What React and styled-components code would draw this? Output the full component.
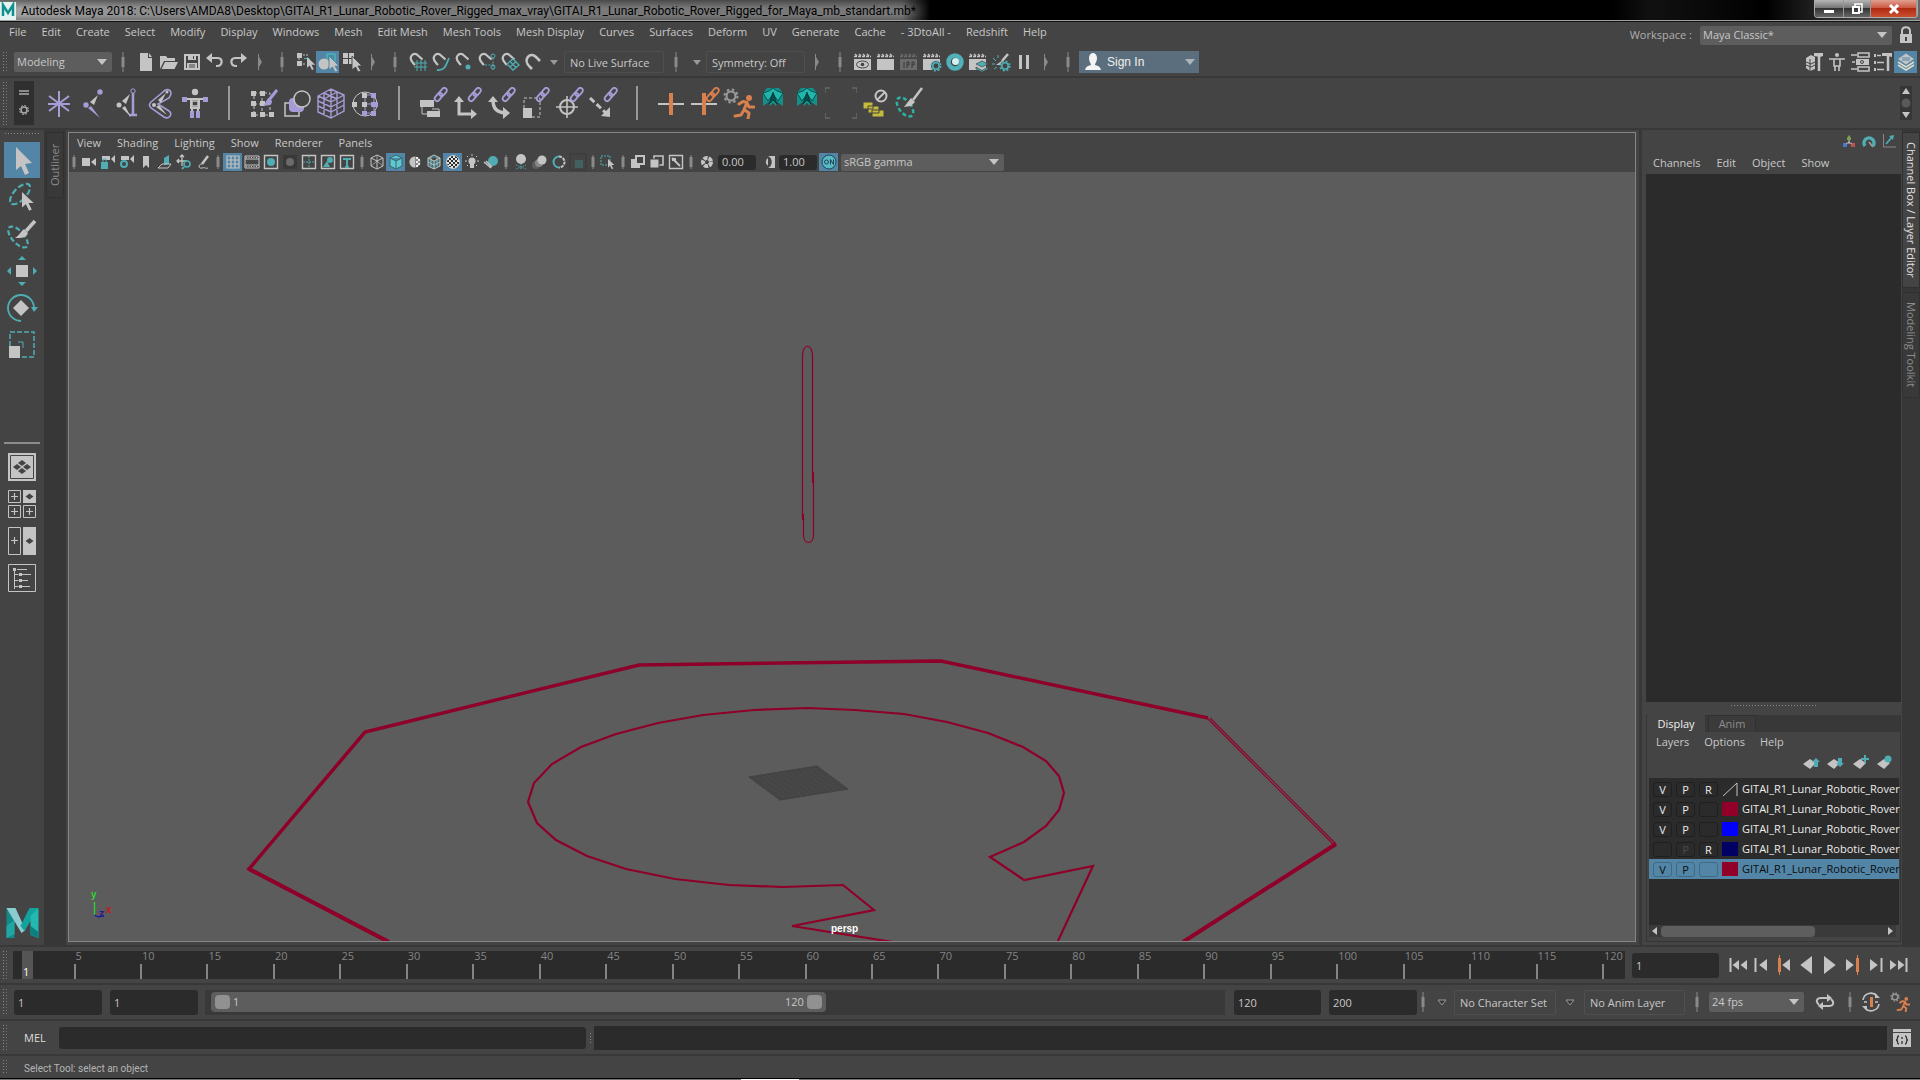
import React from "react";
import styled, { createGlobalStyle } from "styled-components";

const C = "#c4c4c4";
const T = "#4fadb3";
const P = "#a89cd6";
const O = "#d9804f";
const BG = "#444444";
const DARK = "#2b2b2b";
const LINE = "#383838";
const HL = "#5285a6";
const WINE = "#8e0029";

const GlobalStyle = createGlobalStyle`
  * { box-sizing: border-box; }
  html, body { margin: 0; background: #000; }
  body, button, input, select {
    font-family: "Open Sans", "Noto Sans", sans-serif;
    font-size: 11px;
    line-height: 16px;
    color: #c8c8c8;
  }
  button, input, select { margin: 0; padding: 0; border: 0; border-radius: 0; background: none; outline: none; }
  ul { margin: 0; padding: 0; list-style: none; }
  svg { display: block; flex: none; }
`;

/* ---------- layout ---------- */
const Window = styled.div`
  display: flex;
  flex-direction: column;
  height: 100vh;
  overflow: hidden;
  background: ${BG};
`;
const TitleBar = styled.header`
  display: flex;
  justify-content: space-between;
  height: 22px;
  flex: none;
  background: linear-gradient(90deg, #000 84%, #111 86%, #000 92%, #333 96%, #666 100%);
  border-bottom: 1px solid #111;
  box-shadow: inset 0 -1px 0 #a0a0a0;
  overflow: hidden;
`;
const Title = styled.h1`
  display: flex;
  align-items: center;
  gap: 5px;
  margin: 0;
  height: 20px;
  padding: 1px 14px 0 0;
  font-family: Roboto, "Open Sans", sans-serif;
  font-size: 12px;
  font-weight: 400;
  color: #000;
  background: linear-gradient(180deg, #0006, #0000 40%, #0000 75%, #0003), linear-gradient(90deg, #a4a4a4, #7c7c7c 30%, #777 97%, #000);
  white-space: nowrap;
`;
const WinControls = styled.div`
  display: flex;
  height: 18px;
  margin-right: 2px;
  border: 1px solid #aaa;
  border-top: 0;
  border-radius: 0 0 4px 4px;
  overflow: hidden;
`;
const WinButton = styled.button`
  display: grid;
  place-items: center;
  width: ${(p) => p.$w}px;
  border-right: 1px solid #999;
  background: ${(p) =>
    p.$close
      ? "linear-gradient(180deg,#e0a090,#cc5a44 45%,#b02a12 50%,#cc5030)"
      : "linear-gradient(180deg,#b5b5b5,#777 45%,#333 50%,#666)"};
`;
const Row = styled.div`
  display: flex;
  align-items: center;
  flex: none;
  height: ${(p) => p.$h}px;
  border-bottom: ${(p) => (p.$line ? `2px solid ${LINE}` : 0)};
`;
const Spacer = styled.div`
  flex: 1;
`;
const Menu = styled.nav`
  display: flex;
  gap: ${(p) => p.$gap || 15}px;
  padding-left: ${(p) => p.$pad || 9}px;
  align-self: ${(p) => (p.$top ? "flex-start" : "auto")};
  padding-top: ${(p) => (p.$top ? 2 : 0)}px;
`;
const MenuItem = styled.button`
  white-space: nowrap;
`;
const Grip = styled.div`
  flex: none;
  align-self: stretch;
  width: ${(p) => p.$w || 14}px;
  margin: 3px 0;
  background: radial-gradient(circle, #888 1px, transparent 1px) 2px 0 / 3px 3px repeat-y,
    radial-gradient(circle, #777 1px, transparent 1px) 5px 0 / 3px 3px repeat-y;
`;
const SplitGrip = styled.div`
  flex: none;
  width: 8px;
  height: 12px;
  background: radial-gradient(circle, #888 1px, transparent 1px) 3px 0 / 3px 3px repeat-y;
`;
const IconButton = styled.button`
  display: grid;
  place-items: center;
  flex: none;
  width: ${(p) => p.$w || 23}px;
  height: ${(p) => p.$h || 22}px;
  background: ${(p) => (p.$on ? HL : "none")};
`;
const SepCell = styled.div`
  display: grid;
  place-items: center;
  flex: none;
  width: ${(p) => p.$w || 22}px;
`;
const ReadBox = styled.input`
  width: ${(p) => p.$w}px;
  height: ${(p) => p.$h || 22}px;
  padding: 0 5px;
  border: 1px solid #4f4f4f;
  border-radius: 2px;
`;
const Field = styled.input`
  flex: none;
  width: ${(p) => p.$w}px;
  height: ${(p) => p.$h || 25}px;
  margin-right: ${(p) => p.$mr || 0}px;
  padding: 0 4px;
  border-radius: 3px;
  background: ${DARK};
`;
const Combo = styled.div`
  display: grid;
  grid-template-columns: 1fr 20px;
  align-items: center;
  flex: none;
  width: ${(p) => p.$w}px;
  height: ${(p) => p.$h || 20}px;
  background: #5d5d5d;
  border-radius: 2px;
  select {
    grid-area: 1 / 1 / 2 / 3;
    appearance: none;
    width: 100%;
    height: 100%;
    padding: 0 3px;
  }
  svg {
    grid-area: 1 / 2;
    justify-self: center;
    pointer-events: none;
  }
`;
const SignIn = styled.button`
  display: flex;
  align-items: center;
  gap: 4px;
  width: 120px;
  height: 22px;
  padding: 0 4px;
  background: #5a6e7d;
  color: #f0f0f0;
  font-family: "Liberation Sans", sans-serif;
  font-size: 12px;
`;
const WorkspaceLabel = styled.label`
  margin-right: 8px;
  color: #b0b0b0;
`;
const ShelfTabs = styled.div`
  display: flex;
  flex-direction: column;
  justify-content: space-evenly;
  align-items: center;
  width: 20px;
  height: 44px;
  margin-right: 8px;
  background: ${DARK};
  opacity: 0.8;
`;
const ShelfScroll = styled.div`
  display: flex;
  flex-direction: column;
  justify-content: space-around;
  align-items: center;
  width: 12px;
  height: 34px;
  margin-right: 8px;
  background: #363636;
`;
const Main = styled.main`
  display: flex;
  flex: 1;
  min-height: 0;
  border-bottom: 2px solid ${LINE};
`;
const ToolBox = styled.aside`
  display: flex;
  flex-direction: column;
  align-items: center;
  width: 44px;
  padding-bottom: 7px;
`;
const HGrip = styled.div`
  width: ${(p) => p.$w}px;
  height: ${(p) => p.$h}px;
  flex: none;
  align-self: center;
  background: radial-gradient(circle, #888 1px, transparent 1px) 0 2px / 3px 3px repeat-x;
`;
const ToolButton = styled(IconButton)`
  width: 36px;
  height: 36px;
  margin-bottom: 1px;
`;
const ToolRule = styled.div`
  width: 36px;
  height: 2px;
  margin: 78px 0 9px;
  background: #8c8c8c;
`;
const LayoutButton = styled(IconButton)`
  width: 28px;
  height: 28px;
  margin-bottom: 9px;
`;
const DockColumn = styled.aside`
  display: flex;
  flex-direction: column;
  align-items: flex-end;
  width: ${(p) => p.$w}px;
  flex: none;
  background: #373737;
  padding: 2px ${(p) => p.$pr || 0}px 0 0;
`;
const SideTab = styled.button`
  display: flex;
  align-items: center;
  justify-content: center;
  width: 18px;
  height: ${(p) => p.$h}px;
  margin-bottom: 4px;
  writing-mode: vertical-rl;
  white-space: nowrap;
  background: ${(p) => (p.$on ? BG : "#393939")};
  color: ${(p) => (p.$on ? "#e0e0e0" : "#8c8c8c")};
  border: 1px solid #303030;
  transform: ${(p) => (p.$flip ? "rotate(180deg)" : "none")};
`;
const ViewPanel = styled.section`
  display: flex;
  flex-direction: column;
  flex: 1;
  min-width: 0;
  margin: 2px 3px 3px 2px;
  border: 1px solid #868686;
`;
const Canvas = styled.div`
  flex: 1;
  min-height: 0;
  background: #5c5c5c;
  svg {
    width: 100%;
    height: 100%;
  }
`;
const RightDock = styled.aside`
  display: flex;
  flex-direction: column;
  width: 263px;
  flex: none;
  padding: 0 1px 3px 4px;
  border-left: 3px solid ${LINE};
`;
const DockIcons = styled.div`
  display: flex;
  justify-content: flex-end;
  height: 22px;
  align-items: center;
  padding-right: 2px;
`;
const ChannelArea = styled.div`
  flex: 1;
  min-height: 0;
  background: ${DARK};
`;
const LayerPanel = styled.section`
  display: flex;
  flex-direction: column;
  border: 1px solid #353535;
  border-top: 0;
`;
const LayerTabs = styled.div`
  display: flex;
  gap: 3px;
  background: ${LINE};
`;
const LayerTab = styled.button`
  height: 17px;
  width: ${(p) => p.$w}px;
  background: ${(p) => (p.$on ? BG : "#3b3b3b")};
  color: ${(p) => (p.$on ? "#eee" : "#8c8c8c")};
  border: 1px solid ${(p) => (p.$on ? BG : "#303030")};
  border-bottom: 0;
  border-radius: 2px 2px 0 0;
`;
const LayerTools = styled.div`
  display: flex;
  justify-content: flex-end;
  height: 26px;
  align-items: center;
  padding: 0 4px 5px 0;
`;
const LayerList = styled.ul`
  height: 147px;
  margin: 0 1px 0 2px;
  padding-top: 1px;
  background: ${DARK};
`;
const LayerRow = styled.li`
  display: flex;
  align-items: center;
  height: 20px;
  padding-left: 4px;
  gap: 4px;
  white-space: nowrap;
  background: ${(p) => (p.$on ? HL : "none")};
  color: ${(p) => (p.$on ? "#0c0c0c" : "#ececec")};
`;
const Flag = styled.button`
  flex: none;
  width: 19px;
  height: 15px;
  line-height: 13px;
  border: 1px solid ${(p) => (p.$on ? "#3f6a86" : "#1f1f1f")};
  border-radius: 3px;
  color: ${(p) => (p.$dim ? "#4c4c4c" : p.$on ? "#0c0c0c" : "#ececec")};
`;
const Swatch = styled.span`
  flex: none;
  width: 16px;
  height: 14px;
  background: ${(p) => p.$c};
`;
const LayerName = styled.span`
  flex: none;
`;
const HScroll = styled.div`
  display: flex;
  align-items: center;
  gap: 4px;
  height: 12px;
  margin: 0 4px 4px 2px;
  padding: 0 3px;
  background: #3a3a3a;
`;
const HTrack = styled.div`
  flex: 1;
`;
const HThumb = styled.div`
  width: 69%;
  height: 11px;
  border-radius: 4px;
  background: #5e5e5e;
`;
const Ruler = styled.div`
  display: flex;
  flex: 1;
  height: 28px;
  padding: 0 8px 0 9px;
  margin-right: 7px;
  background: ${DARK};
`;
const Tick = styled.div`
  flex: ${(p) => p.$n} 0 0;
  min-width: 0;
  padding-left: ${(p) => (p.$first ? 0 : 2)}px;
  line-height: 10px;
  color: #858585;
  background: ${(p) => (p.$first ? "none" : "linear-gradient(#858585, #858585) 0 100% / 2px 15px no-repeat")};
`;
const NowMark = styled.div`
  display: flex;
  align-items: flex-end;
  width: 11px;
  height: 28px;
  padding: 0 0 2px 1px;
  background: #555;
  color: #fff;
`;
const Transport = styled.div`
  display: flex;
  margin: 0 10px 0 7px;
`;
const RangeTrack = styled.div`
  flex: 1;
  height: 25px;
  margin: 0 9px 0 7px;
  padding: 2px 6px;
  background: #393939;
`;
const RangeBar = styled.div`
  display: flex;
  align-items: center;
  gap: 3px;
  width: 61%;
  height: 20px;
  padding: 0 4px;
  border-radius: 4px;
  background: #5d5d5d;
`;
const RangeHandle = styled.button`
  width: 15px;
  height: 14px;
  border-radius: 4px;
  background: #919191;
`;
const MelLabel = styled.label`
  width: 45px;
  padding-left: 10px;
  color: #ddd;
`;
const CommandInput = styled.input`
  width: 527px;
  height: 22px;
  padding: 0 5px;
  border-radius: 3px;
  background: ${DARK};
`;
const CommandResult = styled.output`
  flex: 1;
  height: 24px;
  background: ${DARK};
`;
const HelpLine = styled.p`
  margin: 0;
  padding: 4px 0 0 10px;
  font-family: Roboto, "Open Sans", sans-serif;
  font-size: 10px;
  color: #b4b4b4;
`;
const TaskEdge = styled.div`
  height: 2px;
  flex: none;
  border-top: 1px solid #000;
  background: linear-gradient(90deg, #777 0 38.6%, #fff 38.6% 41.6%, #777 41.6%);
`;

/* ---------- drawings ---------- */
const Svg = ({ s = 20, h, children, ...r }) => (
  <svg width={s} height={h || s} viewBox={`0 0 ${s} ${h || s}`} fill="none" stroke={C} aria-hidden="true" {...r}>
    {children}
  </svg>
);
const F = { fill: C, stroke: "none" };
const FT = { fill: T, stroke: "none" };
const FP = { fill: P, stroke: "none" };

const Down = ({ c = C }) => (
  <Svg s={10} h={6}><path d="M0 0h10l-5 6z" fill={c} stroke="none" /></Svg>
);
const Sep = ({ w, end, h = 20 }) => (
  <SepCell $w={w}>
    <Svg s={6} h={h} stroke="#8a8a8a">
      <path d={end ? `M1.500 ${h / 2 - 8}v16` : `M3 0v${h}`} />
      <path d={end ? `M2 ${h / 2 - 5}l3 5-3 5z` : `M1.500 ${h / 2 - 5}h3v10h-3z`} fill="#8a8a8a" stroke="none" />
    </Svg>
  </SepCell>
);
const cursor = (x, y, k = 1) => (
  <path transform={`translate(${x} ${y}) scale(${k})`} d="M0 0v12l3-2.500 2.500 5 2-1-2.500-5h4z" {...F} />
);
const magnet = <path d="M5.500 11.500C-1 5 6-1 10 3.500l4.500 4M5.500 11.500l1.500 1.500" strokeWidth="2.200" />;
const clap = (
  <>
    <path d="M1 7h17v11H1z" {...F} />
    <path d="M1 4.500h17M2 2l2 2M6 2l2 2M10 2l2 2M14 2l2 2" strokeWidth="1.500" strokeDasharray="3 1" />
  </>
);
const miniGear = (x, y, c = T) => (
  <>
    <circle cx={x} cy={y} r="3.200" stroke={c} strokeWidth="1.600" />
    <circle cx={x} cy={y} r="4.800" stroke={c} strokeWidth="1.600" strokeDasharray="2 1.770" />
  </>
);
const bigGear = (x, y) => (
  <>
    <circle cx={x} cy={y} r="4.500" stroke="#999" strokeWidth="2.200" />
    <circle cx={x} cy={y} r="6.500" stroke="#999" strokeWidth="2" strokeDasharray="2.500 2.600" />
  </>
);
const chain = (c = P) => (
  <g stroke={c} strokeWidth="1.800">
    <rect x="-4.500" y="-2.500" width="9" height="5" rx="2.500" transform="translate(21.500 10) rotate(-50)" />
    <rect x="-4.500" y="-2.500" width="9" height="5" rx="2.500" transform="translate(26 5) rotate(-50)" />
  </g>
);
const runner = (
  <g stroke={O} strokeWidth="3" strokeLinecap="round" strokeLinejoin="round">
    <circle cx="23" cy="9" r="1.500" fill={O} />
    <path d="M13 15l4-2.500 4 1-3 7 5 3.500-1 6M18 21l-3 5-6 1M21 14l2 4 5 0" />
  </g>
);
const body = (
  <>
    <circle cx="16" cy="5" r="3.200" {...F} />
    <path d="M6 12h20M12 12v9h8v-9M13 21v7M19 21v7" strokeWidth="2" />
    <path d="M13 14h6v5h-6z" strokeWidth="1.500" />
    <path d="M3 10h5v5H3zM24 10h5v5h-5zM11 24h4v4h-4zM17 24h4v4h-4zM11 28h4v3h-4zM17 28h4v3h-4z" {...FP} />
  </>
);

const I = {
  file: <Svg><path d="M4 1h8v5h4v13H4zM13 1l3 4h-3z" {...F} /></Svg>,
  open: <Svg><path d="M1 17V4h6l1.500 2H16v3H5zM6 10h13l-3.500 7H2.500z" {...F} /></Svg>,
  save: <Svg><path d="M3 3h14v14H3z" strokeWidth="2" /><path d="M6 3h8v5H6zM5 11h10v6H5z" {...F} /><path d="M11.500 4v3M7 13h6M7 15h6" stroke={BG} /></Svg>,
  undo: <Svg><path d="M5 6h8c5 0 5 8-1 8h-1" strokeWidth="2.200" /><path d="M7 1v10L1 6z" {...F} /></Svg>,
  redo: <Svg><path d="M15 6H7C2 6 2 14 8 14h1" strokeWidth="2.200" /><path d="M13 1v10l6-5z" {...F} /></Svg>,
  hier: <Svg><path d="M2 1h5v5H2zM2 9h5v5H2z" {...F} /><path d="M9 6.500h5v5" stroke={T} /><path d="M4 6v3M8 3h5M8 12h3" strokeDasharray="2 1" />{cursor(12, 5, 0.9)}</Svg>,
  obj: <Svg><path d="M9 2h8v8H9z" stroke="#4ec4c9" fill="#468f9e" /><circle cx="6" cy="12" r="5.500" {...F} /><path d="M11 4v14l3.500-3 2.500 5 3-1-3-5h4z" fill={C} stroke={HL} strokeWidth=".9" /></Svg>,
  comp: <Svg><path d="M2 1h5v5H2zM8 1h5v5H8zM2 7h5v5H2zM8 7h5v5H8z" {...F} /><path d="M11 4v14l3.500-3 2.500 5 3-1-3-5h4z" fill={C} stroke={BG} strokeWidth=".9" /></Svg>,
  mGrid: <Svg>{magnet}<path d="M6 11h13M6 15h13M9 8v11M13 8v11M17 8v11" stroke={T} /></Svg>,
  mCurve: <Svg>{magnet}<path d="M6 18c8 1 9-5 12-12" stroke={T} strokeWidth="1.800" /></Svg>,
  mPoint: <Svg>{magnet}<circle cx="14" cy="15" r="2.500" {...FT} /></Svg>,
  mProj: <Svg>{magnet}<path d="M16 6v12M8 13h9" stroke={T} strokeDasharray="2 1.500" /><circle cx="16" cy="4" r="2" stroke={T} /><circle cx="16" cy="15" r="2" stroke={T} /></Svg>,
  mPlane: <Svg>{magnet}<path d="M7 12l6-5 6 6-6 5zM10 9.500l6 6M10 15l6-5.500" stroke={T} strokeWidth="1.300" /></Svg>,
  mLive: <Svg><path d="M7 15C-1 8 7-1 13 5l4 4M7 15l2 2" strokeWidth="2.600" /></Svg>,
  rView: <Svg>{clap}<ellipse cx="9.500" cy="12.500" rx="6" ry="3.500" stroke="#444" /><circle cx="9.500" cy="12.500" r="1.800" fill="#444" stroke="none" /></Svg>,
  rNow: <Svg>{clap}</Svg>,
  rIpr: <Svg><g opacity=".3">{clap}<path d="M5 10v6M8 16v-6h2v3H8M13 16v-6h2v3h-2" stroke="#222" /></g></Svg>,
  rSet: <Svg>{clap}<circle cx="14" cy="14" r="5" fill={BG} stroke="none" />{miniGear(14, 14)}</Svg>,
  hyper: <Svg><circle cx="10" cy="10" r="6.500" stroke="#4fb2b9" strokeWidth="4.500" /><circle cx="10.500" cy="9.500" r="3.500" fill="#d8f0f0" stroke="none" /></Svg>,
  rLayer: <Svg>{clap}<path d="M8 12l6-3 6 3-6 3zM8 15l6 3.500 6-3.500v2l-6 3-6-3z" fill={T} stroke={BG} strokeWidth=".7" /></Svg>,
  light: <Svg><path d="M17 2l-6 7" strokeWidth="2.500" /><path d="M12 8l-3 5-4 0z" {...F} />{miniGear(14, 14)}<path d="M2 6l3 3M1 12h3M3 17l3-2M7 3v3" stroke={T} /></Svg>,
  pause: <Svg><path d="M5 3h3v14H5zM12 3h3v14h-3z" {...F} /></Svg>,
  user: <Svg><path d="M6 6a4 5 0 0 1 8 0c0 4-2 5-2 7 3 1 5 1 6 5H2c1-4 3-4 6-5 0-2-2-3-2-7z" fill="#f4f4f4" stroke="none" /></Svg>,
  lock: <Svg s={16} h={20}><path d="M4 9V6c0-5 8-5 8 0v3" strokeWidth="2" /><path d="M2 9h12v9H2z" {...F} /><path d="M8 12v4" stroke="#444" strokeWidth="2" /></Svg>,
  mt: <Svg><path d="M2 6l5-3 4 2v12l-5 2-4-3zM10 1h9v3l-3 1-6-1z" {...F} /><path d="M2 10l5 2 4-2M2 13l5 2 4-2M6 7v12" stroke={BG} /><path d="M15 3v16" strokeWidth="2.500" /></Svg>,
  human: <Svg><circle cx="10" cy="3" r="2" {...F} /><path d="M2 7h16M7 7v7h6V7M8 14v5M12 14v5" strokeWidth="1.600" /></Svg>,
  attr: <Svg><path d="M1 3h6M2 10h3M1 17h6M8 1h11v4H8zM8 15h11v4H8z" strokeWidth="1.600" /><path d="M6 7h13v6H6z" {...F} /><circle cx="12" cy="10" r="1.500" stroke="#444" /></Svg>,
  tool: <Svg><path d="M1 2h2v3H1zM1 9h2v3H1zM1 16h2v3H1zM9 1h10v4l-5-1H9z" {...F} /><path d="M4 3.500h4M4 10.500h7M4 17.500h7" strokeWidth="1.600" /><path d="M15 4v15" strokeWidth="2.500" /></Svg>,
  layers: <Svg><path d="M2 13l8 5 8-5M2 10l8 5 8-5" stroke="#e0d8c8" strokeWidth="1.500" /><path d="M2 7l8-5.500L18 7l-8 5.500z" {...F} /><path d="M6 6h8M6 8h8" stroke={HL} /></Svg>,

  // shelf
  locator: <Svg s={32}><path d="M16 4v26M6 9l20 15M6 24L26 9M5 17h22" stroke={P} strokeWidth="2" /></Svg>,
  joint: <Svg s={32}><circle cx="23" cy="5" r="2.700" {...FP} /><path d="M11 21l3-2 9 12z" {...FP} /><path d="M21 8l-8 7 4 3z" {...F} /><circle cx="9" cy="18" r="2.700" {...FP} /></Svg>,
  ik: <Svg s={32}><path d="M22 6v23M18 28h8" stroke={P} strokeWidth="2.500" /><circle cx="22" cy="4" r="2.200" stroke={P} /><path d="M19 7l-8 7 4 3zM11 21l3-2 6 11z" {...F} /><circle cx="8" cy="18" r="2.500" {...F} /></Svg>,
  bone: <Svg s={32}><path d="M26 7c0-6-6-5-8-2L6 15c-2 2-2 4 0 6l13 9c5 3 9-3 5-6l-11-7 11-6z" stroke={P} strokeWidth="1.600" /><path d="M21 6l-8 7 3 3zM11 20l3-2 8 10z" {...F} /><circle cx="9" cy="18" r="2" {...F} /><circle cx="22" cy="5" r="1.500" {...F} /></Svg>,
  body: <Svg s={32}>{body}</Svg>,
  paint: <Svg s={32}><path d="M7 6h16v22H7zM15 6v22M7 17h16" strokeDasharray="3 2" /><path d="M4 4h5v5H4zM13 4h5v5h-5zM4 14h5v5H4zM4 25h5v5H4zM13 25h5v5h-5zM22 25h5v5h-5zM13 14h5v5h-5z" {...F} /><path d="M30 3l-8 10" stroke={P} strokeWidth="3" /><path d="M22 11l3 3c0 5-5 5-9 4 3-1 3-6 6-7z" {...FP} /></Svg>,
  blend: <Svg s={32}><path d="M4 16h14v13H4z" strokeWidth="1.500" /><rect x="8" y="11" width="15" height="14" rx="4" {...FP} /><circle cx="21" cy="12" r="8" fill={BG} strokeWidth="1.500" /></Svg>,
  lattice: <Svg s={32}><path d="M3 9l13-7 13 6v16l-13 7-13-6zM3 9l13 6 13-7M16 15v16M3 14l13 6 13-7M3 19l13 6 13-7M9 6v22M22 5v22M9 12l13-7M9 6l13 6M16 2v13" stroke={P} strokeWidth="1.400" /></Svg>,
  cluster: <Svg s={32}><circle cx="16" cy="17" r="12" /><path d="M16 8h9v18h-9zM16 17h12" stroke={P} /><path d="M13 6h5v5h-5zM13 15h5v5h-5zM3 15h5v5H3z" {...F} /><path d="M22 6h5v5h-5zM22 15h7v5h-7zM22 24h5v5h-5zM13 24h5v5h-5z" {...FP} /></Svg>,
  cParent: <Svg s={32}><path d="M3 13h14v7H3zM10 24h13v6H10z" {...F} /><path d="M5 20v7h5M15 22h7v3" />{chain()}</Svg>,
  cPoint: <Svg s={32}><path d="M8 13v14h14" strokeWidth="3" /><path d="M3 15l5-6 5 6zM20 22l6 5-6 5z" {...F} />{chain()}</Svg>,
  cOrient: <Svg s={32}><path d="M8 13c0 9 4 12 12 13" strokeWidth="3.500" /><path d="M3 15l5-6 5 6zM18 20l7 6-7 6z" {...F} />{chain()}</Svg>,
  cScale: <Svg s={32}><path d="M5 11h16v19H5z" strokeDasharray="3 2" /><path d="M4 21h9v10H4z" {...F} />{chain()}</Svg>,
  cAim: <Svg s={32}><circle cx="14" cy="20" r="7" strokeWidth="2" /><path d="M14 9v22M3 20h22" strokeWidth="1.600" />{chain()}</Svg>,
  cPole: <Svg s={32}><path d="M3 11l16 15" strokeWidth="3" strokeDasharray="6 3" /><path d="M23 30V20l-9 9z" {...F} />{chain()}</Svg>,
  key: <Svg s={32}><path d="M3 17h26" strokeWidth="2" /><path d="M14 6h4v22h-4z" fill={O} stroke="none" /></Svg>,
  keyLink: <Svg s={32}><path d="M2 17h26" strokeWidth="2" /><path d="M13 6h4v22h-4z" fill={O} stroke="none" />{chain(O)}</Svg>,
  run: <Svg s={32}>{bigGear(8, 9)}<g transform="translate(3 2)">{runner}</g></Svg>,
  crown: <Svg s={32}><path d="M6 6l4-5h12l4 5v13l-6-4-1 4-3-3-3 3-1-4-6 4z" fill="#12908a" stroke="none" /><path d="M6 6l6-2 4-3 4 3 6 2-5 8-5-7-5 7z" fill="#22b5ab" stroke="#043c3c" strokeWidth=".8" /><path d="M12 17l4-12 4 12-4-4z" fill="#0a4a4a" stroke="#033" strokeWidth=".7" /></Svg>,
  frame: <Svg s={32}><path d="M0 6V1h5M27 1h5v5M32 26v5h-5M5 31H0v-5" stroke="#777" /></Svg>,
  folders: <Svg s={32}><path d="M4 15h10v7H4zM9 19h11v7H9zM13 23h12v7H13z" fill="#c4bb3c" stroke={BG} /><circle cx="22" cy="9" r="5.500" strokeWidth="2" /><path d="M18 13l8-8" strokeWidth="2" /></Svg>,
  lassoBrush: <Svg s={32}><ellipse cx="12" cy="20" rx="6" ry="11" transform="rotate(-38 12 20)" stroke="#2fb0a4" strokeWidth="2.500" strokeDasharray="4 2.500" /><path d="M29 1l-9 12" strokeWidth="2.500" /><path d="M18 11l4 4-4 4-7 1z" {...F} /></Svg>,
};

// view panel icons, 18px square
const frameBox = <path d="M2.500 2.500h13v13h-13z" strokeWidth="1.400" />;
const cube = (c, f) => <path d="M9 2l6 3v8l-6 3-6-3V5zM3 5l6 3 6-3M9 8v8" stroke={c} fill={f || "none"} />;
const V = {
  cam: <path d="M2 5h8v8H2zM11 9l5-4v8z" {...F} />,
  camLock: <><path d="M3 3h8v4H3zM12 6l4-4v8z" {...F} /><path d="M2 9h7v7H2z" {...FT} /><path d="M4 9V6h3v3" stroke={T} /></>,
  camGear: <><path d="M3 3h8v4H3zM12 6l4-4v8z" {...F} /><circle cx="6" cy="11" r="3" stroke={T} strokeWidth="2" fill={BG} /></>,
  mark: <path d="M6 3h6v12l-3-3-3 3z" {...F} />,
  plane: <><path d="M8 12V5l5-3v9z" {...FT} /><path d="M2 15l4-4h9l-3 4z" /></>,
  pan: <><path d="M7 2v11M2 8h10M5 4l2-2 2 2M4 6L2 8l2 2" strokeWidth="1.300" /><circle cx="12" cy="11" r="3" stroke={T} strokeWidth="1.600" /><path d="M9 14l-2 2" stroke={T} strokeWidth="2" /></>,
  pencil: <><path d="M14 3l-6 8" strokeWidth="2.500" /><path d="M8 11c-4 0-4 5 0 4s3 1 6 0" /></>,
  grid: <path d="M3 3h12v12H3zM7 3v12M11 3v12M3 7h12M3 11h12" strokeWidth="1.200" />,
  film: <><path d="M2 3h14v12H2zM2 6h14M2 12h14" /><path d="M3 4.500h12M3 13.500h12" strokeDasharray="1 1.500" /></>,
  res: <>{frameBox}<circle cx="9" cy="9" r="4" {...FT} /></>,
  gate: <g opacity=".3"><path d="M2 2h14v14H2z" fill="#222" stroke="none" /><circle cx="9" cy="9" r="4" {...F} /></g>,
  field: <>{frameBox}<path d="M3 9h12M9 3v12" stroke={T} strokeDasharray="2 1" /></>,
  safe: <>{frameBox}<path d="M4 14l4-6 3 6z" {...FT} /><circle cx="11" cy="7" r="3" {...FT} /></>,
  title: <>{frameBox}<path d="M5 6h8M9 6v8M7 14h4" stroke={T} strokeWidth="2" /></>,
  wire: <>{cube(C)}<path d="M3 13l6-5 6 5M9 2v6" strokeWidth=".7" /></>,
  shade: cube("#2f6a72", "#62c6cf"),
  tex: <><circle cx="9" cy="9" r="5.500" fill="#888" stroke="none" /><path d="M9 3.500a5.500 5.500 0 0 0 0 11z" {...F} /><path d="M10 5h2M12 7h2M10 9h2M12 11h2M10 13h2" stroke="#eee" strokeWidth="2" /></>,
  wireShade: <>{cube(C, "#3c7378")}<path d="M6 4v9M12 4v9M3 9l6 3 6-3" strokeWidth=".8" /></>,
  check: (
    <>
      <circle cx="9" cy="9" r="6.500" fill="#e4e4e4" stroke="none" />
      <path
        d="M7 3h2v2H7zM11 3h2v2h-2zM5 5h2v2H5zM9 5h2v2H9zM13 5h1v2h-1zM3 7h2v2H3zM7 7h2v2H7zM11 7h2v2h-2zM5 9h2v2H5zM9 9h2v2H9zM13 9h2v2h-2zM3 11h2v1H3zM7 11h2v2H7zM11 11h2v2h-2zM5 13h2v1H5zM9 13h2v2H9z"
        fill="#2c2c2c"
        stroke="none"
      />
      <circle cx="9" cy="9" r="6.500" stroke="#ccc" strokeWidth=".8" />
    </>
  ),
  bulb: <><circle cx="9" cy="8" r="3.500" {...F} /><path d="M7 10h4v5H7z" {...F} /><path d="M9 1v2M2 8h2M14 8h2M4 3l1 1M14 3l-1 1M4 13l1-1M14 13l-1-1" /></>,
  shadow: <><circle cx="11" cy="8" r="5" {...FT} /><path d="M2 9l7 6M4 8l6 6" strokeWidth="1.500" /></>,
  ao: <><circle cx="9" cy="6" r="5" {...F} /><path d="M4 12l10 4M14 12L4 16M9 11v5" stroke={T} strokeDasharray="1 1" /></>,
  blur: <><circle cx="5" cy="12" r="4" fill="#5d5d5d" stroke="none" /><circle cx="8" cy="10" r="4" fill="#888" stroke="none" /><circle cx="11" cy="7" r="4.500" {...F} /></>,
  aa: <><path d="M9 3.500a5.500 5.500 0 0 0 0 11" stroke={T} strokeWidth="2" /><path d="M9 3.500a5.500 5.500 0 0 1 0 11" strokeWidth="2" strokeDasharray="3 1" /></>,
  dof: <><path d="M1 1h16v16H1z" stroke="#383838" /><path d="M6 7h8v8H6z" fill="#41605f" stroke="none" /></>,
  iso: <><path d="M2 3h9v9H2z" stroke={T} strokeDasharray="2 1" />{cursor(9, 6, 0.7)}</>,
  xr1: <><path d="M2 6h9v9H2z" {...F} /><path d="M7 3h8v8H7z" fill={BG} strokeWidth="2" /></>,
  xr2: <><path d="M6 3h9v9H6z" strokeWidth="1.600" /><path d="M2 6h9v9H2z" fill={C} stroke={BG} /></>,
  xr3: <>{frameBox}<path d="M5 5l8 8" strokeWidth="2" /><path d="M5 5h4v3H5z" {...F} /></>,
  aperture: <circle cx="9" cy="9" r="4" strokeWidth="4" strokeDasharray="4 1" />,
  contrast: <><path d="M7 5a4 4.500 0 0 0 0 8z" {...F} /><path d="M7 3h7v12H7c5-2 5-10 0-12z" {...F} /></>,
  on: <><circle cx="9" cy="9" r="7" fill="#56b9c4" stroke="#245" /><circle cx="6.500" cy="9" r="2" stroke="#245" /><path d="M10.500 11.500v-5l3 5v-5" stroke="#245" /></>,
};

const L = {
  arrow: <Svg s={36}><path d="M12 5v23l5-4 4 9 4-2-4-9 7-1z" {...F} /></Svg>,
  lasso: <Svg s={36}><ellipse cx="16" cy="15" rx="6" ry="13" transform="rotate(44 16 15)" stroke={T} strokeWidth="2.200" strokeDasharray="6 2.500" /><g transform="translate(18 13) scale(1.300)">{cursor(0, 0)}</g></Svg>,
  paintSel: <Svg s={36}><ellipse cx="14" cy="21" rx="6" ry="13" transform="rotate(-42 14 21)" stroke={T} strokeWidth="2.200" strokeDasharray="5 2.500" /><path d="M31 5l-9 10" strokeWidth="3.500" /><path d="M20 13l4 4c-2 5-6 5-13 5 4-2 6-7 9-9z" {...F} /></Svg>,
  move: <Svg s={36}><path d="M12 12h12v12H12z" {...F} /><path d="M14 7l4-4 4 4zM14 29l4 4 4-4zM7 14l-4 4 4 4zM29 14l4 4-4 4z" {...FT} /></Svg>,
  rotate: <Svg s={36}><path d="M17 31A13 13 0 1 1 30 18" stroke={T} strokeWidth="1.800" /><path d="M27 17h7l-4 5z" {...FT} /><path d="M17 10l8 8-8 8-8-8z" {...F} /></Svg>,
  scale: <Svg s={36}><path d="M6 5h24v25H6z" stroke={T} strokeWidth="1.500" strokeDasharray="5 2" /><path d="M14 15h5v6" stroke={T} /><path d="M5 19h11v12H5z" {...F} /></Svg>,
};
const dia = (x, y, k = 1, c = "#444") => <path d={`M${x - 4 * k} ${y}l${4 * k}-${3 * k} ${4 * k} ${3 * k}-${4 * k} ${3 * k}z`} fill={c} stroke="none" />;
const plus = (x, y) => <path d={`M${x - 3.5} ${y}h7M${x} ${y - 3.5}v7`} strokeWidth="1.200" />;
const G = {
  one: <Svg s={28} h={28}><path d="M0 0h28v28H0z" {...F} /><path d="M2.500 2.500h23v23h-23z" stroke="#444" />{dia(14, 10)}{dia(14, 18)}{dia(9, 14)}{dia(19, 14)}</Svg>,
  four: <Svg s={28} h={28}><path d="M.5.5h12v12H.5zM.5 15.500h12v12H.5zM15.500 15.500h12v12h-12z" />{plus(6.5, 6.5)}{plus(6.5, 21.5)}{plus(21.5, 21.5)}<path d="M15 0h13v13H15z" {...F} />{dia(21.5, 6.5)}</Svg>,
  two: <Svg s={28} h={28}><path d="M.5.5h12v27H.5z" />{plus(6.5, 13.5)}<path d="M15 0h13v28H15z" {...F} />{dia(21.5, 14)}</Svg>,
  tree: <Svg s={28} h={28}><path d="M.5.5h27v27H.5zM6.500 6v19M6.500 10.500h4M6.500 16.500h4M6.500 22.500h4M9 5.500h10M13 10.500h10M13 16.500h7M13 22.500h9" /><path d="M5 4h3v3H5zM11 9h3v3h-3zM11 15h3v3h-3zM11 21h3v3h-3z" {...F} /></Svg>,
};

const Logo = ({ w, h }) => (
  <svg width={w} height={h} viewBox="0 0 32 30" aria-hidden="true">
    <path d="M0 0h8v30H0z" fill="#128a89" />
    <path d="M0 30V18l8-6v14z" fill="#1ea7a4" />
    <path d="M0 0h9l10 22-4 3z" fill="#8ccbd0" />
    <path d="M14 18L23 0h9L18 23z" fill="#12a39e" />
    <path d="M24 8l8-8v30l-8-3z" fill="#23b8b0" />
    <path d="M24 18l8 6v6l-8-3z" fill="#0c7f80" />
  </svg>
);

const OUTER = "387,941 249,869 365,732 639,665 941,661 1208,718";
const INNER =
  "1057,943 1093,866 1024,880 990,857 1024,842 1046,826 1059,810 1064,793 1059,776 1046,761 1023,747 988,733 947,722 904,714 855,710 807,708 754,710 703,715 658,723 616,734 581,747 552,764 534,783 528,802 537,823 556,840 587,856 626,869 675,879 729,885 783,887 843,885 874,910 792,926 899,943";
const gridLines = Array.from({ length: 13 }, (_, i) => i / 12);

const Scene = () => (
  <svg viewBox="69 172 1566 769" preserveAspectRatio="xMidYMax slice" fill="none" stroke={WINE} role="img" aria-label="Perspective view">
    <path d="M749 777L817 766 848 789 780 800z" fill="#434343" stroke="#3c3c3c" />
    <g stroke="#4e4e4e" strokeWidth=".6">
      {gridLines.map((t) => (
        <path key={t} d={`M${749 + 68 * t} ${777 - 11 * t}l31 23M${749 + 31 * t} ${777 + 23 * t}l68 -11`} />
      ))}
    </g>
    <polyline points={OUTER} strokeWidth="3.500" />
    <path d="M1208 719L1334 845M1210 718L1336 844" strokeWidth="1.200" />
    <path d="M1336 844L1183 942" strokeWidth="4" />
    <path d="M389 942L249 869" strokeWidth="4" />
    <polyline points={INNER} strokeWidth="2.200" />
    <path d="M802.500 518V356c0-13 10-13 10 0v117l1 6v56c0 10-10 10-10 0v-17z" strokeWidth="1.200" />
    <path d="M813 472v11M803 514v6" strokeWidth="2" />
    <path d="M94.500 916v-14" stroke="#2fd52f" strokeWidth="1.300" />
    <path d="M94 915l5 2 5-2" stroke="#1a1a9a" strokeWidth="1.300" />
    <path d="M99 914l6-3" stroke="#b01c4a" />
    <g stroke="none" fontFamily="Liberation Sans, sans-serif" fontWeight="700" fontSize="10">
      <text x="91" y="898" fill="#2fd52f">y</text>
      <text x="106" y="913" fill="#c01c1c">x</text>
      <text x="99" y="917" fill="#1c1ca8">z</text>
      <text x="831" y="932" fill="#fff">persp</text>
    </g>
  </svg>
);

/* ---------- parts ---------- */
const MenuBar = ({ items, ...r }) => (
  <Menu {...r}>{items.map((t) => <MenuItem key={t} type="button">{t}</MenuItem>)}</Menu>
);
const Icons = ({ names, set = I, on = [], ...r }) =>
  names.map((n) => (
    <IconButton key={n} type="button" aria-label={n} $on={on.includes(n)} {...r}>{set[n]}</IconButton>
  ));
const ViewIcons = ({ names, on = [] }) =>
  names.map((n) => (
    <IconButton key={n} type="button" aria-label={n} $w={19} $h={18} $on={on.includes(n)}>
      <Svg s={18}>{V[n]}</Svg>
    </IconButton>
  ));
const Select = ({ label, value, w, h, id }) => (
  <Combo $w={w} $h={h}>
    <select id={id} aria-label={label} defaultValue={value}><option>{value}</option></select>
    <Down />
  </Combo>
);
const ShelfSep = () => (
  <SepCell $w={34}><Svg s={2} h={34}><path d="M1 0v34" stroke="#999" strokeWidth="2" /></Svg></SepCell>
);

const MENUS = ["File", "Edit", "Create", "Select", "Modify", "Display", "Windows", "Mesh", "Edit Mesh", "Mesh Tools", "Mesh Display", "Curves", "Surfaces", "Deform", "UV", "Generate", "Cache", "- 3DtoAll -", "Redshift", "Help"];
const LAYERS = [
  { f: ["V", "P", "R"], c: null },
  { f: ["V", "P", ""], c: "#900028" },
  { f: ["V", "P", ""], c: "#0000ff" },
  { f: ["", "P", "R"], c: "#000064", dimP: true },
  { f: ["V", "P", ""], c: "#900028", on: true },
];
const TICKS = Array.from({ length: 24 }, (_, i) => (i + 1) * 5);
const tri = (x, dir, k = 8) => `M${x} ${11 - k}v${2 * k}l${dir * k * 1.3}-${k}z`;
const PLAY = {
  "Go to start": <><path d="M3.500 4v14" strokeWidth="2" /><path d={tri(12, -1, 5)} {...F} /><path d={tri(20, -1, 5)} {...F} /></>,
  "Step back frame": <><path d="M5.500 4v14" strokeWidth="2" /><path d={tri(17, -1, 6)} {...F} /></>,
  "Step back key": <><path d="M6.500 1v20" stroke={O} /><path d="M5 4h3v14H5z" fill={O} stroke="none" /><path d={tri(17, -1, 6)} {...F} /></>,
  "Play backwards": <path d={tri(16, -1, 9)} {...F} />,
  "Play forwards": <path d={tri(5, 1, 9)} {...F} />,
  "Step forward key": <><path d="M15.500 1v20" stroke={O} /><path d="M14 4h3v14h-3z" fill={O} stroke="none" /><path d={tri(4, 1, 6)} {...F} /></>,
  "Step forward frame": <><path d="M16.500 4v14" strokeWidth="2" /><path d={tri(5, 1, 6)} {...F} /></>,
  "Go to end": <><path d="M18.500 4v14" strokeWidth="2" /><path d={tri(2, 1, 5)} {...F} /><path d={tri(10, 1, 5)} {...F} /></>,
};
const layerIcon = (extra) => (
  <Svg s={18}><path d="M1 10l7-5 6 4-6 6z" {...F} />{extra}</Svg>
);
const Caret = ({ w }) => (
  <SepCell $w={w}><Svg s={10} h={7}><path d="M1 1h8L5 6z" stroke="#999" fill="#333" /></Svg></SepCell>
);

export default function App() {
  return (
    <Window>
      <GlobalStyle />
      <TitleBar>
        <Title>
          <Svg s={16} h={18} stroke="none"><path d="M0 0h16v18H0z" fill="#e4f2f1" /><path d="M3 14V3l5 8 5-8v11" stroke="#12908e" strokeWidth="2.500" /></Svg>
          Autodesk Maya 2018: C:\Users\AMDA8\Desktop\GITAI_R1_Lunar_Robotic_Rover_Rigged_max_vray\GITAI_R1_Lunar_Robotic_Rover_Rigged_for_Maya_mb_standart.mb*
        </Title>
        <WinControls>
          <WinButton $w={29} aria-label="Minimize"><Svg s={12}><path d="M1 7h10v3H1z" fill="#fff" stroke="none" /></Svg></WinButton>
          <WinButton $w={27} aria-label="Restore"><Svg s={12} stroke="#fff"><path d="M4 3V1h7v8H9" strokeWidth="1.500" /><path d="M2 4h6v6H2z" strokeWidth="2" /></Svg></WinButton>
          <WinButton $w={46} $close aria-label="Close"><Svg s={12} stroke="#fff"><path d="M2 2l8 8M10 2l-8 8" strokeWidth="3" /></Svg></WinButton>
        </WinControls>
      </TitleBar>

      <Row $h={26}>
        <MenuBar items={MENUS} $top />
        <Spacer />
        <WorkspaceLabel htmlFor="workspace">Workspace :</WorkspaceLabel>
        <Select id="workspace" value="Maya Classic*" w={192} h={19} />
        <IconButton $w={28} aria-label="Lock workspace">{I.lock}</IconButton>
      </Row>

      <Row $h={30} $line>
        <Grip />
        <Select label="Menu set" value="Modeling" w={98} />
        <Sep />
        <Icons names={["file", "open", "save", "undo", "redo"]} />
        <Sep end /><Sep />
        <Icons names={["hier", "obj", "comp"]} on={["obj"]} />
        <Sep end /><Sep />
        <Icons names={["mGrid", "mCurve", "mPoint", "mProj", "mPlane", "mLive"]} />
        <SepCell $w={20}><Svg s={8} h={5}><path d="M0 0h8L4 5z" fill="#999" stroke="none" /></Svg></SepCell>
        <ReadBox aria-label="Live surface" defaultValue="No Live Surface" $w={100} />
        <Sep w={24} />
        <SepCell $w={18}><Svg s={8} h={5}><path d="M0 0h8L4 5z" fill="#999" stroke="none" /></Svg></SepCell>
        <ReadBox aria-label="Symmetry" defaultValue="Symmetry: Off" $w={99} />
        <Sep w={24} end /><Sep />
        <Icons names={["rView", "rNow", "rIpr", "rSet", "hyper", "rLayer", "light", "pause"]} />
        <Sep end /><Sep />
        <SignIn type="button">{I.user}Sign In<Spacer /><Down c="#aab4ba" /></SignIn>
        <Spacer />
        <Icons names={["mt", "human", "attr", "tool", "layers"]} on={["layers"]} />
        <SepCell $w={3} />
      </Row>

      <Row $h={52} $line>
        <Grip />
        <ShelfTabs>
          <Svg s={10} h={6}><path d="M0 1h10M0 4h10" strokeWidth="1.500" /></Svg>
          <Svg s={12}><circle cx="6" cy="6" r="3" strokeWidth="1.500" /><circle cx="6" cy="6" r="4.500" strokeDasharray="2 1.500" /></Svg>
        </ShelfTabs>
        <Icons names={["locator", "joint", "ik", "bone", "body"]} $w={34} $h={34} />
        <ShelfSep />
        <Icons names={["paint", "blend", "lattice", "cluster"]} $w={34} $h={34} />
        <ShelfSep />
        <Icons names={["cParent", "cPoint", "cOrient", "cScale", "cAim", "cPole"]} $w={34} $h={34} />
        <ShelfSep />
        <Icons names={["key", "keyLink", "run", "crown"]} $w={34} $h={34} />
        <Icons names={["crown", "frame", "folders", "lassoBrush"]} $w={34} $h={34} />
        <Spacer />
        <ShelfScroll>
          <Svg s={8} h={6}><path d="M0 6l4-6 4 6z" {...F} /></Svg>
          <Svg s={10}><circle cx="5" cy="5" r="4.500" fill="#5a5a5a" stroke="none" /></Svg>
          <Svg s={8} h={6}><path d="M0 0l4 6 4-6z" {...F} /></Svg>
        </ShelfScroll>
      </Row>

      <Main>
        <ToolBox>
          <HGrip $w={36} $h={12} />
          {Object.keys(L).map((k) => (
            <ToolButton key={k} type="button" aria-label={k} $on={k === "arrow"}>{L[k]}</ToolButton>
          ))}
          <ToolRule />
          {Object.keys(G).map((k) => (
            <LayoutButton key={k} type="button" aria-label={`${k} layout`}>{G[k]}</LayoutButton>
          ))}
          <Spacer />
          <Logo w={33} h={30} />
        </ToolBox>
        <DockColumn $w={22} $pr={2}>
          <SideTab type="button" $h={66} $flip>Outliner</SideTab>
        </DockColumn>
        <ViewPanel>
          <Row $h={19}><MenuBar items={["View", "Shading", "Lighting", "Show", "Renderer", "Panels"]} $pad={8} $gap={16} /></Row>
          <Row $h={20}>
            <Sep w={10} h={14} />
            <ViewIcons names={["cam", "camLock", "camGear", "mark", "plane", "pan", "pencil"]} />
            <Sep w={11} h={14} />
            <ViewIcons names={["grid", "film", "res", "gate", "field", "safe", "title"]} on={["grid"]} />
            <Sep w={11} h={14} />
            <ViewIcons names={["wire", "shade", "tex", "wireShade", "check", "bulb", "shadow"]} on={["shade", "check"]} />
            <Sep w={11} h={14} />
            <ViewIcons names={["ao", "blur", "aa", "dof"]} />
            <Sep w={11} h={14} />
            <ViewIcons names={["iso"]} />
            <Sep w={11} h={14} />
            <ViewIcons names={["xr1", "xr2", "xr3"]} />
            <Sep w={12} h={14} />
            <ViewIcons names={["aperture"]} />
            <SepCell $w={2} />
            <Field aria-label="Exposure" defaultValue="0.00" $w={38} $h={15} $mr={4} />
            <ViewIcons names={["contrast"]} />
            <Field aria-label="Gamma" defaultValue="1.00" $w={38} $h={15} $mr={2} />
            <ViewIcons names={["on"]} on={["on"]} />
            <SepCell $w={3} />
            <Select label="View transform" value="sRGB gamma" w={163} h={17} />
          </Row>
          <Canvas><Scene /></Canvas>
        </ViewPanel>
        <RightDock>
          <DockIcons>
            <IconButton $w={21} aria-label="Manipulator"><Svg s={14}><path d="M5 4l2-3 2 3v2H5z" fill="#7da050" stroke="none" /><path d="M1 9h4v4H1z" fill="#4a78d0" stroke="none" /><path d="M9 9h4v4H9z" fill="#c05050" stroke="none" /><path d="M7 6v4M4 10l3-2 3 2" /></Svg></IconButton>
            <IconButton $w={20} aria-label="Speed"><Svg s={14}><path d="M3 12a5 5 0 1 1 8 0" stroke={T} strokeWidth="3.500" /><path d="M7 8l4 5" stroke="#999" strokeWidth="2" /></Svg></IconButton>
            <IconButton $w={20} aria-label="Hyperbolic"><Svg s={14}><path d="M1.500 0v13H14" stroke="#888" /><path d="M4 10l6-7" stroke={T} strokeWidth="1.800" /><path d="M7 2l5-1-1 5z" {...FT} /></Svg></IconButton>
          </DockIcons>
          <Row $h={22}><MenuBar items={["Channels", "Edit", "Object", "Show"]} $pad={7} $gap={16} /></Row>
          <ChannelArea />
          <HGrip $w={87} $h={13} />
          <LayerPanel>
            <LayerTabs>
              <LayerTab type="button" $w={58} $on>Display</LayerTab>
              <LayerTab type="button" $w={48}>Anim</LayerTab>
            </LayerTabs>
            <Row $h={20}><MenuBar items={["Layers", "Options", "Help"]} /></Row>
            <LayerTools>
              <IconButton $w={24} aria-label="Move layer up">{layerIcon(<path d="M12 13V8h-2l4-4 4 4h-2v5z" {...FT} />)}</IconButton>
              <IconButton $w={24} aria-label="Move layer down">{layerIcon(<path d="M12 4v5h-2l4 4 4-4h-2V4z" {...FT} />)}</IconButton>
              <IconButton $w={27} aria-label="Create empty layer">{layerIcon(<path d="M13 1v8M9 5h8" stroke={T} strokeWidth="2" />)}</IconButton>
              <IconButton $w={22} aria-label="Create layer from selected">{layerIcon(<circle cx="12" cy="5" r="3.500" {...FT} />)}</IconButton>
            </LayerTools>
            <LayerList>
              {LAYERS.map((l, i) => (
                <LayerRow key={i} $on={l.on}>
                  {l.f.map((t, j) => (
                    <Flag key={j} type="button" aria-label={`Layer ${i + 1} flag ${j + 1}`} $on={l.on} $dim={l.dimP && j === 1}>
                      {t}
                    </Flag>
                  ))}
                  {l.c ? <Swatch $c={l.c} /> : <Svg s={16} h={14}><path d="M1 14L15 1v13" /></Svg>}
                  <LayerName>GITAI_R1_Lunar_Robotic_Rover</LayerName>
                </LayerRow>
              ))}
            </LayerList>
            <HScroll>
              <Svg s={5} h={8}><path d="M5 0v8L0 4z" {...F} /></Svg>
              <HTrack><HThumb /></HTrack>
              <Svg s={5} h={8}><path d="M0 0v8l5-4z" {...F} /></Svg>
            </HScroll>
          </LayerPanel>
        </RightDock>
        <DockColumn $w={18}>
          <SideTab type="button" $h={156} $on>Channel Box / Layer Editor</SideTab>
          <SideTab type="button" $h={106}>Modeling Toolkit</SideTab>
        </DockColumn>
      </Main>

      <Row $h={38} $line>
        <Grip $w={13} />
        <Ruler>
          <Tick $n={4} $first><NowMark>1</NowMark></Tick>
          {TICKS.map((t) => <Tick key={t} $n={t === 120 ? 1 : 5}>{t}</Tick>)}
        </Ruler>
        <Field aria-label="Current frame" defaultValue="1" $w={87} />
        <Transport>
          {Object.entries(PLAY).map(([k, d]) => (
            <IconButton key={k} type="button" aria-label={k}><Svg s={22}>{d}</Svg></IconButton>
          ))}
        </Transport>
      </Row>

      <Row $h={36} $line>
        <Grip />
        <Field aria-label="Animation start" defaultValue="1" $w={88} $mr={8} />
        <Field aria-label="Playback start" defaultValue="1" $w={88} />
        <RangeTrack>
          <RangeBar>
            <RangeHandle type="button" aria-label="Range start" />1<Spacer />120
            <RangeHandle type="button" aria-label="Range end" />
          </RangeBar>
        </RangeTrack>
        <Field aria-label="Playback end" defaultValue="120" $w={87} $mr={8} />
        <Field aria-label="Animation end" defaultValue="200" $w={88} />
        <Sep w={12} />
        <Caret w={25} />
        <ReadBox aria-label="Character set" defaultValue="No Character Set" $w={102} $h={25} />
        <Caret w={28} />
        <ReadBox aria-label="Anim layer" defaultValue="No Anim Layer" $w={101} $h={25} />
        <Sep w={24} />
        <Select label="Frame rate" value="24 fps" w={95} />
        <IconButton $w={42} aria-label="Loop"><Svg><path d="M4 13c-4-4-2-7 2-7h8M16 7c4 4 2 7-2 7H6" strokeWidth="2" /><path d="M12 2l5 4-5 4zM8 10l-5 4 5 4z" {...F} /></Svg></IconButton>
        <Sep w={8} />
        <IconButton $w={34} aria-label="Auto keyframe"><Svg><path d="M2 8a8 8 0 0 1 14-4M18 12a8 8 0 0 1-14 4M3 10h3M14 10h3" strokeWidth="1.600" /><path d="M14 1v5h5zM6 19v-5H1z" {...F} /><path d="M9 5h3v10H9z" fill={O} stroke="none" /></Svg></IconButton>
        <IconButton $w={24} aria-label="Preferences"><svg width="20" height="20" viewBox="0 0 32 32" fill="none" aria-hidden="true">{bigGear(8, 8)}<g transform="translate(3 2)">{runner}</g></svg></IconButton>
        <SepCell $w={8} />
      </Row>

      <Row $h={35} $line>
        <Grip />
        <MelLabel htmlFor="mel">MEL</MelLabel>
        <CommandInput id="mel" />
        <SplitGrip />
        <CommandResult />
        <IconButton $w={30} aria-label="Script editor"><Svg s={18}><path d="M0 0h18v3H0zM0 4h18v14H0z" {...F} /><path d="M6 7c-3 0 0 4-3 4 3 0 0 4 3 4M12 7c3 0 0 4 3 4-3 0 0 4-3 4M9 8v2M9 12v3" stroke="#333" strokeWidth="1.300" /></Svg></IconButton>
        <SepCell $w={3} />
      </Row>

      <Row $h={22}>
        <Grip />
        <HelpLine>Select Tool: select an object</HelpLine>
      </Row>
      <TaskEdge />
    </Window>
  );
}
